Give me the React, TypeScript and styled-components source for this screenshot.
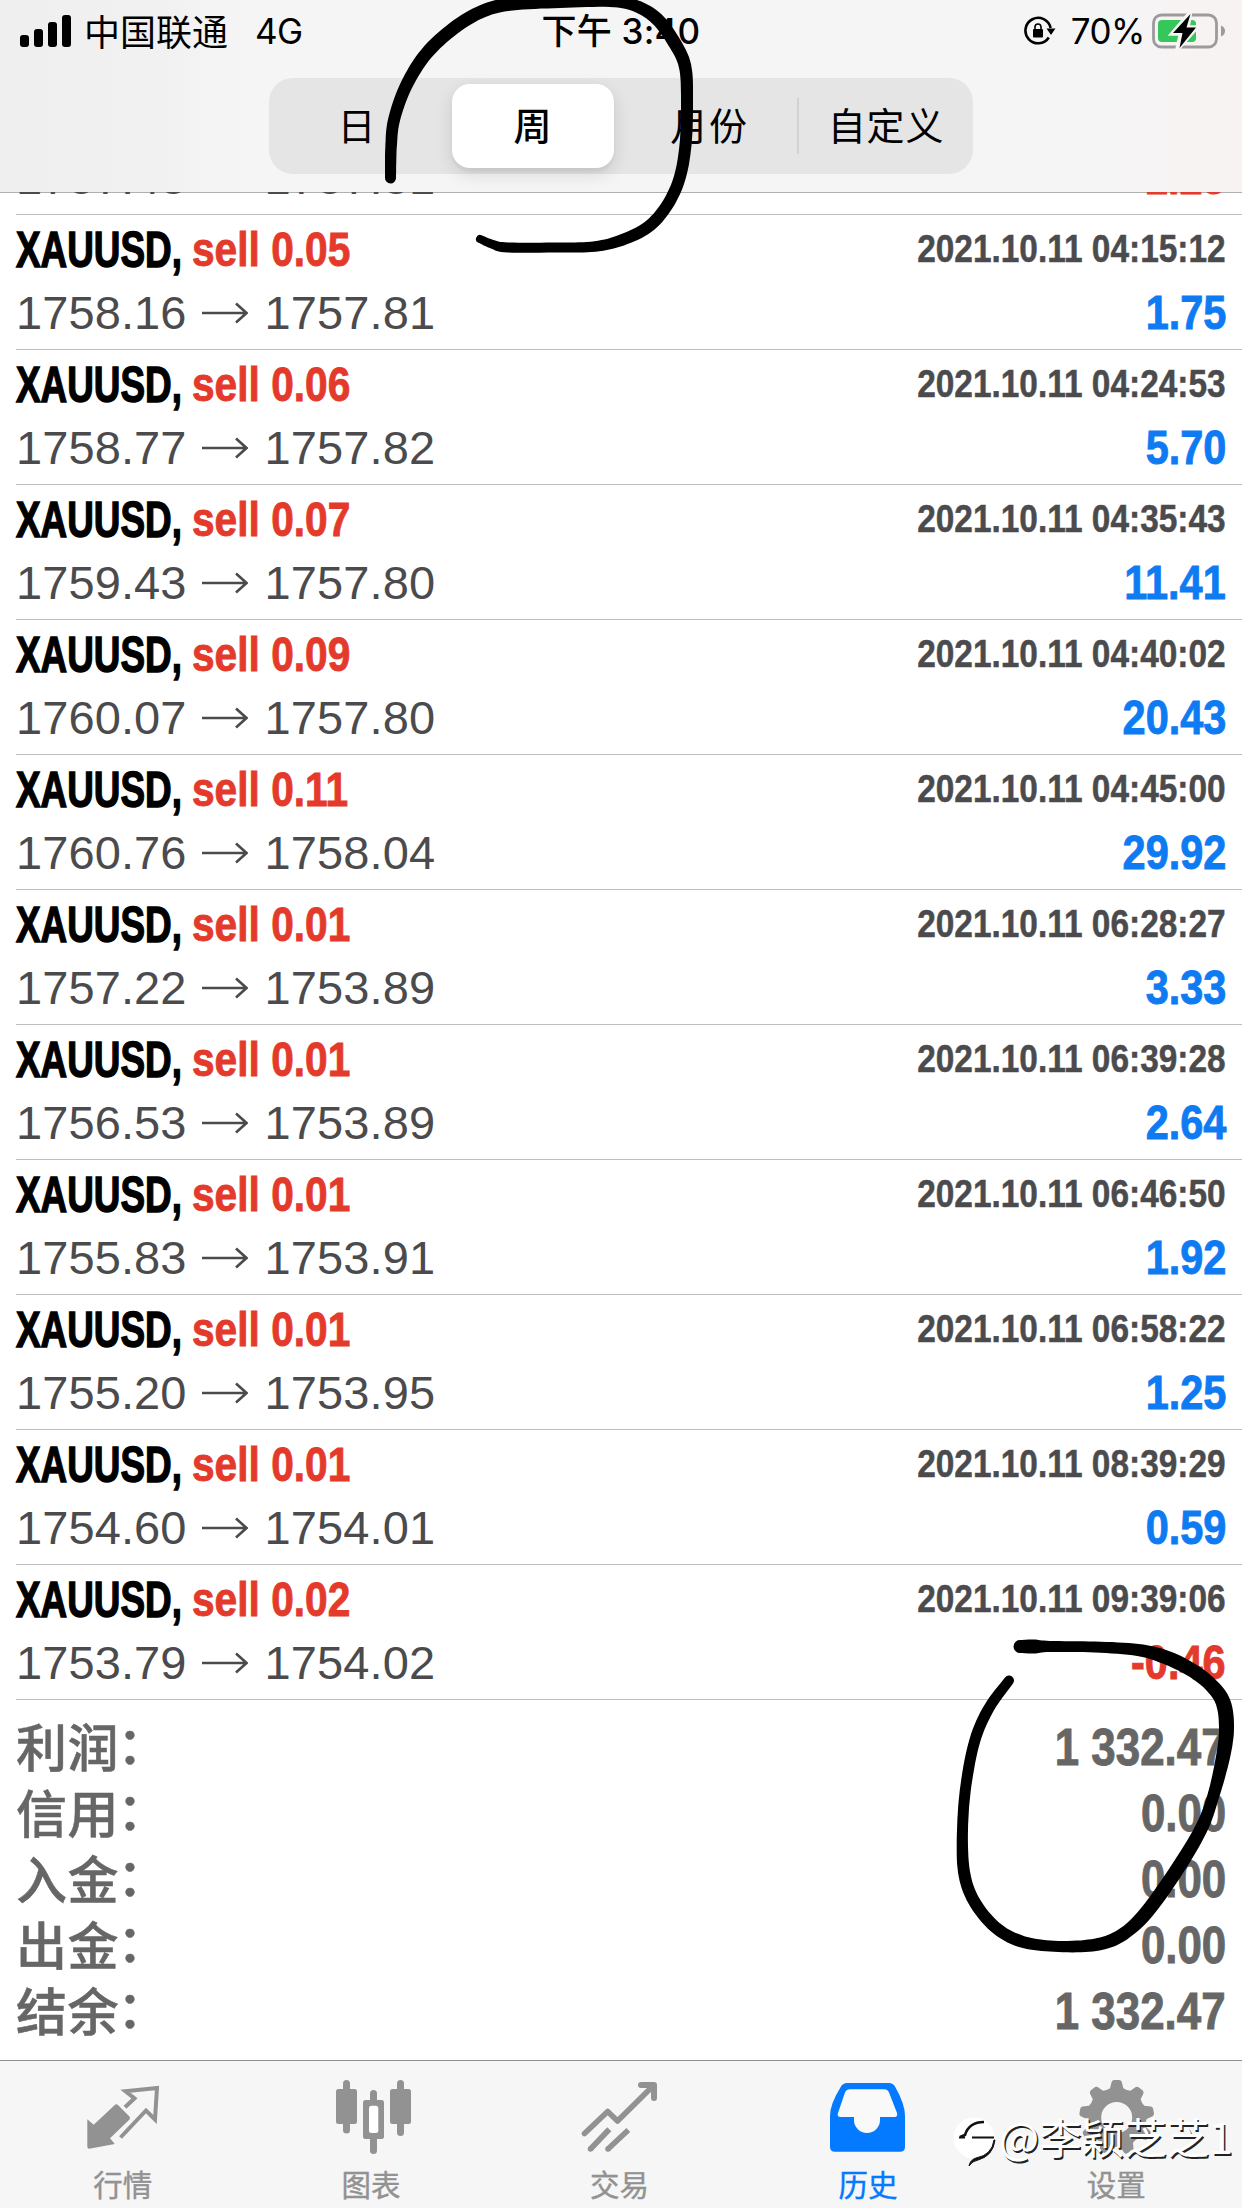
import React from "react";
import styled, { createGlobalStyle } from "styled-components";

const CJK = '"Noto Sans CJK SC", sans-serif';
const SYSTEM = `Inter, ${CJK}`;
const HELV = `"Liberation Sans", ${CJK}`;

const Global = createGlobalStyle`
  body { margin: 0; background: #fff; }
  * { box-sizing: border-box; }
`;

const Screen = styled.div`
  position: relative;
  width: 1242px;
  height: 2208px;
  display: flex;
  flex-direction: column;
  overflow: hidden;
  background: #fff;
  font-family: ${HELV};
`;

/* ---------- header ---------- */

const Header = styled.header`
  height: 193px;
  flex: none;
  border-bottom: 1px solid #b0b0b0;
  background: linear-gradient(90deg, #efefef 0, #f2f1f1 160px, #f6f5f5 240px, #f6f5f5 1120px, #f8f2f2 100%);
`;

const StatusBar = styled.div`
  height: 78px;
  padding: 0 16px 17px 20px;
  display: grid;
  grid-template-columns: 1fr auto 1fr;
  align-items: center;
  font-family: ${SYSTEM};
  font-size: 35px;
  color: #000;
`;

const StatusSide = styled.div<{ $end?: boolean }>`
  display: flex;
  align-items: center;
  justify-content: ${(p) => (p.$end ? "flex-end" : "flex-start")};
  white-space: nowrap;
`;

const Carrier = styled.span`
  margin: 0 0 2px 12px;
  font-family: ${CJK};
  font-size: 36px;
  line-height: 50px;
`;

const Network = styled.span`
  margin-left: 27px;
  letter-spacing: -0.6px;
`;

const Clock = styled.div`
  font-weight: 500;
  line-height: 50px;
  padding-right: 4px;
  white-space: nowrap;
  letter-spacing: 0.2px;
`;

const Percent = styled.span`
  margin: 0 7px 0 15px;
  letter-spacing: -0.5px;
`;

const Segments = styled.div`
  width: 704px;
  height: 96px;
  margin: 0 auto;
  display: grid;
  grid-template-columns: repeat(4, 1fr);
  align-items: center;
  border-radius: 24px;
  background: #e6e5e6;
`;

const Segment = styled.button<{ $active?: boolean; $divided?: boolean }>`
  height: ${(p) => (p.$active ? 84 : 56)}px;
  margin: ${(p) => (p.$active ? "0 7px" : "0")};
  padding: 0 0 4px;
  border: 0;
  border-left: ${(p) => (p.$divided ? "2px solid #d2d2d3" : "0")};
  border-radius: ${(p) => (p.$active ? 18 : 0)}px;
  background: ${(p) => (p.$active ? "#fff" : "transparent")};
  box-shadow: ${(p) => (p.$active ? "0 6px 18px rgba(0,0,0,.12), 0 4px 3px rgba(0,0,0,.04)" : "none")};
  font: ${(p) => (p.$active ? 500 : 400)} 38px/52px ${CJK};
  letter-spacing: 0.8px;
  color: #000;
`;

/* ---------- trades ---------- */

const Body = styled.main`
  flex: 1;
  min-height: 0;
  margin-top: -1px;
  display: flex;
  flex-direction: column;
  justify-content: flex-end;
  overflow: hidden;
`;

const Trade = styled.article`
  flex: none;
  height: 135px;
  margin-left: 16px;
  padding: 3px 16px 0 0;
  border-bottom: 1px solid #bdbebe;
`;

const Line = styled.div`
  height: 63px;
  display: flex;
  justify-content: space-between;
  align-items: flex-start;
  line-height: 63px;
  white-space: nowrap;
`;

const Deal = styled.div`
  display: flex;
`;

/* Bold grotesque squeezed horizontally toward one edge. */
const Condensed = styled.span<{ $size: number; $color: string; $squeeze: number; $end?: boolean }>`
  display: block;
  font-weight: 700;
  font-size: ${(p) => p.$size}px;
  color: ${(p) => p.$color};
  transform: scaleX(${(p) => p.$squeeze});
  transform-origin: ${(p) => (p.$end ? "right" : "left")} center;
  -webkit-text-stroke: 0.9px currentColor;
`;

const SymbolName = styled(Condensed)`
  width: 176px;
  -webkit-text-stroke-width: 1.4px;
`;

const Stamp = styled(Condensed)`
  line-height: 61px;
  -webkit-text-stroke-width: 0.5px;
`;

const Prices = styled.div`
  display: flex;
  align-items: center;
  font-size: 47px;
  letter-spacing: 0.1px;
  color: #4b4b4d;
`;

const ArrowIcon = styled.svg`
  width: 46px;
  height: 24px;
  margin: 1px 17px 0 15px;
  fill: none;
  stroke: #4b4b4d;
  stroke-width: 2.6;
`;

/* ---------- totals ---------- */

const Totals = styled.section`
  flex: none;
  padding: 15px 16px 15px 16px;
`;

const Total = styled.div`
  height: 66px;
  display: flex;
  justify-content: space-between;
  line-height: 66px;
`;

const TotalLabel = styled.span`
  font-family: ${CJK};
  font-weight: 500;
  font-size: 51px;
  line-height: 61px;
  letter-spacing: 0.6px;
  color: #666;
  -webkit-text-stroke: 0.5px #666;
`;

const Colon = styled.span`
  display: inline-block;
  transform: translate(-2px, -3px);
`;

/* ---------- tab bar ---------- */

const TabBar = styled.nav`
  flex: none;
  height: 148px;
  display: grid;
  grid-template-columns: repeat(5, 1fr);
  border-top: 1px solid #8f8f8f;
  background: #f6f6f6;
`;

const Tab = styled.a<{ $active?: boolean }>`
  display: flex;
  flex-direction: column;
  align-items: center;
  padding-top: 15px;
  font: 400 29.5px/44px ${CJK};
  color: ${(p) => (p.$active ? "#037aff" : "#929292")};
`;

const TabIcon = styled.svg`
  width: 90px;
  height: 80px;
  margin-bottom: 5px;
  fill: currentColor;
`;

const TabLabel = styled.span`
  margin-right: 3px;
  -webkit-text-stroke: 0.4px currentColor;
`;

/* ---------- overlays ---------- */

const Ink = styled.svg`
  position: absolute;
  inset: 0;
  width: 1242px;
  height: 2208px;
  pointer-events: none;
`;

const Watermark = styled.div`
  position: absolute;
  left: 952px;
  top: 2108px;
  display: flex;
  align-items: flex-start;
  height: 60px;
  font: 400 42.5px/58px ${CJK};
  color: #fff;
  text-shadow: 1.5px 1.5px 0.5px #222;
  white-space: nowrap;
`;

const WatermarkLogo = styled.svg`
  width: 46px;
  height: 60px;
  margin: 1px 1px 0 0;
`;

const WatermarkName = styled.span`
  height: 58px;
  margin-top: -1px;
`;

type Pt = [x: number, y: number, w: number];

/** Outline of a pen stroke whose width varies along its points. */
function brush(pts: Pt[]): string {
  const s: Pt[] = [];
  for (let i = 0; i < pts.length - 1; i++) {
    const a = pts[Math.max(i - 1, 0)];
    const b = pts[i];
    const c = pts[i + 1];
    const d = pts[Math.min(i + 2, pts.length - 1)];
    for (let k = 0; k < 8; k++) {
      const t = k / 8;
      const f = (j: 0 | 1 | 2) =>
        0.5 *
        (2 * b[j] + (c[j] - a[j]) * t + (2 * a[j] - 5 * b[j] + 4 * c[j] - d[j]) * t * t +
          (3 * b[j] - a[j] - 3 * c[j] + d[j]) * t * t * t);
      s.push([f(0), f(1), f(2)]);
    }
  }
  s.push(pts[pts.length - 1]);
  const left: string[] = [];
  const right: string[] = [];
  s.forEach(([x, y, w], i) => {
    const p = s[Math.max(i - 1, 0)];
    const n = s[Math.min(i + 1, s.length - 1)];
    const len = Math.hypot(n[0] - p[0], n[1] - p[1]) || 1;
    const nx = (-(n[1] - p[1]) / len) * (w / 2);
    const ny = ((n[0] - p[0]) / len) * (w / 2);
    left.push(`${(x + nx).toFixed(1)} ${(y + ny).toFixed(1)}`);
    right.unshift(`${(x - nx).toFixed(1)} ${(y - ny).toFixed(1)}`);
  });
  const endR = s[s.length - 1][2] / 2;
  const startR = s[0][2] / 2;
  return `M${left.join("L")}A${endR} ${endR} 0 0 0 ${right[0]}L${right.join("L")}A${startR} ${startR} 0 0 0 ${left[0]}Z`;
}

const RING_TOP: Pt[] = [
  [390.5, 178, 11], [391, 148, 11.5], [394, 120, 12], [406, 86, 12.5], [426, 54, 13], [454, 28, 13],
  [483, 11, 13], [512, 4, 13], [560, 2, 12], [610, 1, 12], [636, 6, 12], [657, 19, 13],
  [674, 42, 13], [685, 66, 12.5], [687, 100, 12], [685.5, 145, 12], [679, 180, 12], [666, 207, 12],
  [648, 227, 12], [622, 240, 11.5], [595, 246.5, 10.5], [560, 247.5, 10], [508, 247.5, 10], [493, 244.5, 9], [480, 239, 8],
];

const RING_BOTTOM: Pt[] = [
  [1020, 1646.5, 13], [1034, 1646.5, 14], [1050, 1646.5, 11], [1095, 1647, 11], [1138, 1650, 12],
  [1165, 1657, 14], [1190, 1669, 14], [1210, 1684, 14], [1223, 1702, 15], [1226.5, 1728, 15],
  [1223, 1757, 14], [1213, 1797, 12], [1201, 1829, 13], [1178, 1868, 14], [1150, 1908, 14],
  [1130, 1929, 13], [1110, 1941, 13], [1085, 1946, 12], [1050, 1946, 11], [1020, 1941, 12],
  [995, 1927, 12], [974, 1901, 12], [964, 1872, 12], [962.5, 1830, 11], [966, 1785, 11],
  [975, 1740, 11], [989, 1708, 11], [1009, 1680.5, 10],
];

function gear(cx: number, cy: number, teeth: number, outer: number, inner: number, hole: number): string {
  const at = (r: number, a: number) => `${(cx + r * Math.sin(a)).toFixed(2)} ${(cy - r * Math.cos(a)).toFixed(2)}`;
  const step = (Math.PI * 2) / teeth;
  let d = "";
  for (let i = 0; i < teeth; i++) {
    const a = i * step;
    d += `${i ? "L" : "M"}${at(inner, a - step * 0.32)}L${at(outer - 1.5, a - step * 0.2)}Q${at(outer, a - step * 0.16)} ${at(outer, a - step * 0.1)}L${at(outer, a + step * 0.1)}Q${at(outer, a + step * 0.16)} ${at(outer - 1.5, a + step * 0.2)}L${at(inner, a + step * 0.32)}Q${at(inner - 1.2, a + step * 0.5)} ${at(inner, a + step * 0.68)}`;
  }
  return `${d}ZM${cx - hole} ${cy}a${hole} ${hole} 0 1 0 ${hole * 2} 0a${hole} ${hole} 0 1 0 ${-hole * 2} 0Z`;
}

const TRADES = [
  ["0.05", "1757.43", "1757.81", "2021.10.11 04:01:20", "-1.25"],
  ["0.05", "1758.16", "1757.81", "2021.10.11 04:15:12", "1.75"],
  ["0.06", "1758.77", "1757.82", "2021.10.11 04:24:53", "5.70"],
  ["0.07", "1759.43", "1757.80", "2021.10.11 04:35:43", "11.41"],
  ["0.09", "1760.07", "1757.80", "2021.10.11 04:40:02", "20.43"],
  ["0.11", "1760.76", "1758.04", "2021.10.11 04:45:00", "29.92"],
  ["0.01", "1757.22", "1753.89", "2021.10.11 06:28:27", "3.33"],
  ["0.01", "1756.53", "1753.89", "2021.10.11 06:39:28", "2.64"],
  ["0.01", "1755.83", "1753.91", "2021.10.11 06:46:50", "1.92"],
  ["0.01", "1755.20", "1753.95", "2021.10.11 06:58:22", "1.25"],
  ["0.01", "1754.60", "1754.01", "2021.10.11 08:39:29", "0.59"],
  ["0.02", "1753.79", "1754.02", "2021.10.11 09:39:06", "-0.46"],
];

const TOTALS = [
  ["利润", "1 332.47"],
  ["信用", "0.00"],
  ["入金", "0.00"],
  ["出金", "0.00"],
  ["结余", "1 332.47"],
];

const TABS = [
  {
    label: "行情",
    icon: (
      <>
        <path d="M8.3 43.3L14.7 48.7L35.5 29.3Q37 27.3 39 29L50 40Q52 42 50 44L31 62.3L35.8 68L10.3 72.8Q8.3 72.7 8.3 70.5Z" />
        <path d="M46 31.3L55.5 22.3L46.5 15.3L78 12L76 43.5L67 34.5L41.5 61.5" fill="none" stroke="currentColor" strokeWidth="4" />
      </>
    ),
  },
  {
    label: "图表",
    icon: (
      <>
        <rect x="15" y="4" width="7" height="53.5" rx="3.5" />
        <rect x="8" y="13" width="21" height="35" rx="2.5" />
        <rect x="42" y="14" width="7" height="64" rx="3.5" />
        <rect x="35" y="24" width="21" height="39" rx="2.5" />
        <rect x="41" y="29.7" width="9.3" height="27.3" rx="2.5" fill="#fff" />
        <rect x="69" y="4" width="7" height="56" rx="3.5" />
        <rect x="62" y="13" width="21" height="35" rx="2.5" />
      </>
    ),
  },
  {
    label: "交易",
    icon: (
      <g fill="none" stroke="currentColor" strokeWidth="5.6">
        <path d="M8.5 57.5L31.7 35.5L41.5 45L77 10" strokeLinejoin="round" strokeLinecap="round" />
        <path d="M65 9L78 9L78 22" strokeWidth="6" strokeLinejoin="round" strokeLinecap="round" />
        <path d="M33.3 53.3L14.5 73M52.3 54L32 73" />
        <path d="M14.5 73h.01M32 73h.01" strokeLinecap="round" />
      </g>
    ),
  },
  {
    label: "历史",
    active: true,
    icon: (
      <>
        <path d="M23 7H65Q69 7 71 10.5Q81 28 81 40V71Q81 75.7 76 75.7H11Q6 75.7 6 71V40Q6 28 17 10.5Q19 7 23 7Z" />
        <path d="M26 13.3H60Q63.5 13.3 65 16.5L73 37Q74 41 70.5 41H56V44A13 13 0 0 1 30 44V41H17Q12.5 41 14 37L21 16.5Q22.5 13.3 26 13.3Z" fill="#f9f9f9" />
      </>
    ),
  },
  { label: "设置", icon: <path fillRule="evenodd" d={gear(43.7, 41.5, 9, 37.5, 30, 15.5)} /> },
];

export default function App() {
  return (
    <Screen>
      <Global />
      <Header>
        <StatusBar>
          <StatusSide>
            <svg width="52" height="34" viewBox="0 0 52 34">
              <rect x="0" y="21" width="9" height="12" rx="3" />
              <rect x="14" y="15" width="9" height="18" rx="3" />
              <rect x="28" y="8" width="9" height="25" rx="3" />
              <rect x="42" y="1" width="9" height="32" rx="3" />
            </svg>
            <Carrier>中国联通</Carrier>
            <Network>4G</Network>
          </StatusSide>
          <Clock>下午 3:40</Clock>
          <StatusSide $end>
            <svg width="32" height="30" viewBox="0 0 32 30">
              <path d="M24.8 21.5A12.7 12.7 0 1 1 26.6 12" fill="none" stroke="#000" strokeWidth="2.6" />
              <path d="M22.5 12.5H31.5L27 19Z" />
              <rect x="9" y="13" width="10" height="8.5" rx="1" />
              <path d="M11 14V11a3 3 0 0 1 6 0V14" fill="none" stroke="#000" strokeWidth="1.6" />
            </svg>
            <Percent>70%</Percent>
            <svg width="74" height="36" viewBox="0 0 74 36">
              <rect x="1.5" y="2" width="63" height="32" rx="8" fill="none" stroke="#9d9a9d" strokeWidth="2.8" />
              <path d="M69 12.5Q73 14 73 18T69 23.5Z" fill="#9d9a9d" />
              <rect x="6" y="7" width="38" height="22" rx="4" fill="#35c759" />
              <path d="M38 0L20.5 20.5H29L25.5 36L44.5 14.5H35.5Z" stroke="#f6f5f5" strokeWidth="4.5" />
              <path d="M38.5 1L21 20H30.5L27.5 35L44 14.5H34.5Z" />
            </svg>
          </StatusSide>
        </StatusBar>
        <Segments>
          <Segment>日</Segment>
          <Segment $active>周</Segment>
          <Segment>月份</Segment>
          <Segment $divided>自定义</Segment>
        </Segments>
      </Header>

      <Body>
        {TRADES.map(([volume, open, close, time, profit]) => (
          <Trade key={time}>
            <Line>
              <Deal>
                <SymbolName $size={49.5} $color="#000" $squeeze={0.745}>XAUUSD,</SymbolName>
                <Condensed $size={49} $color="#e43a2c" $squeeze={0.83}>sell {volume}</Condensed>
              </Deal>
              <Stamp $size={39.5} $color="#4b4b4d" $squeeze={0.846} $end>{time}</Stamp>
            </Line>
            <Line>
              <Prices>
                {open}
                <ArrowIcon viewBox="0 0 46 24">
                  <path d="M0 12H44M34 2.5L44.5 12L34 21.5" />
                </ArrowIcon>
                {close}
              </Prices>
              <Condensed $size={48.5} $color={profit.startsWith("-") ? "#e43a2c" : "#0f7bf2"} $squeeze={0.855} $end>
                {profit}
              </Condensed>
            </Line>
          </Trade>
        ))}
        <Totals>
          {TOTALS.map(([label, value]) => (
            <Total key={label}>
              <TotalLabel>{label}<Colon>：</Colon></TotalLabel>
              <Condensed $size={51} $color="#666" $squeeze={0.86} $end>{value}</Condensed>
            </Total>
          ))}
        </Totals>
      </Body>

      <TabBar>
        {TABS.map((tab) => (
          <Tab key={tab.label} $active={tab.active}>
            <TabIcon viewBox="0 0 90 80">{tab.icon}</TabIcon>
            <TabLabel>{tab.label}</TabLabel>
          </Tab>
        ))}
      </TabBar>

      <Watermark>
        <WatermarkLogo viewBox="0 0 46 60">
          <circle cx="22" cy="29" r="20.5" fill="#fff" />
          <path d="M8 28L13 26Q17 13 32 13" fill="none" stroke="#111" strokeWidth="2.6" />
          <path d="M7 28.5H13M20 28.5H42" fill="none" stroke="#111" strokeWidth="2" />
          <path d="M42 31Q40 46 24 49Q18 51 17 57Q20 52 26 51Q41 47 43 31Z" fill="#111" stroke="#111" />
        </WatermarkLogo>
        <WatermarkName>@李颖芝芝1</WatermarkName>
      </Watermark>

      <Ink viewBox="0 0 1242 2208">
        <path d={brush(RING_TOP)} />
        <path d={brush(RING_BOTTOM)} />
      </Ink>
    </Screen>
  );
}
